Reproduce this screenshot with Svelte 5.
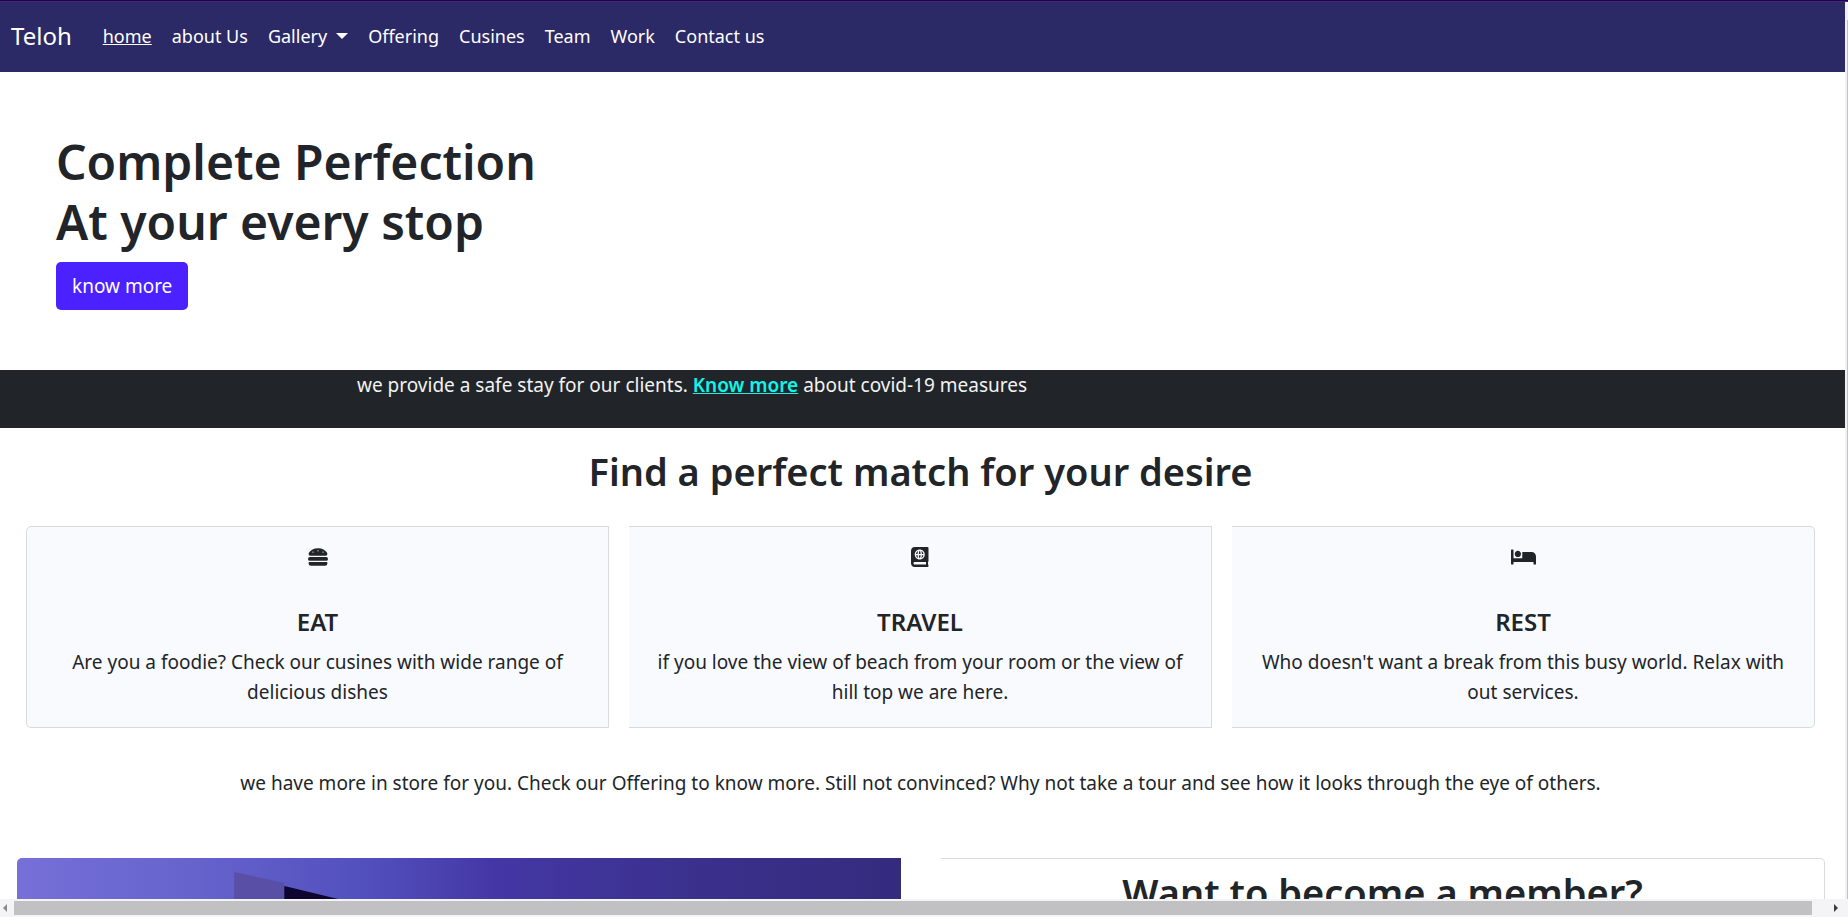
<script>
  const links = ['home', 'about Us', 'Gallery', 'Offering', 'Cusines', 'Team', 'Work', 'Contact us'];

  const cards = [
    {
      title: 'EAT',
      text: 'Are you a foodie? Check our cusines with wide range of delicious dishes',
      viewBox: '0 0 512 512',
      path: 'M464 256H48a48 48 0 0 0 0 96h416a48 48 0 0 0 0-96zm16 128H32a16 16 0 0 0-16 16v16a64 64 0 0 0 64 64h352a64 64 0 0 0 64-64v-16a16 16 0 0 0-16-16zM58.64 224h394.72c34.57 0 54.62-43.9 34.82-75.88C448 83.2 359.55 32.1 256 32c-103.54.1-192 51.2-232.18 116.11C4 180.09 24.07 224 58.64 224zM384 112a16 16 0 1 1-16 16 16 16 0 0 1 16-16zM256 80a16 16 0 1 1-16 16 16 16 0 0 1 16-16zm-128 32a16 16 0 1 1-16 16 16 16 0 0 1 16-16z'
    },
    {
      title: 'TRAVEL',
      text: 'if you love the view of beach from your room or the view of hill top we are here.',
      viewBox: '0 0 448 512',
      path: 'M318.38 208h-39.09c-1.49 27.03-6.54 51.35-14.21 70.41 27.71-13.24 48.02-39.19 53.3-70.41zm0-32c-5.29-31.22-25.59-57.17-53.3-70.41 7.68 19.06 12.72 43.38 14.21 70.41h39.09zM224 97.31c-7.69 7.45-20.77 34.42-23.43 78.69h46.87c-2.67-44.26-15.75-71.24-23.44-78.69zm-41.08 8.28c-27.71 13.24-48.02 39.19-53.3 70.41h39.09c1.49-27.03 6.53-51.35 14.21-70.41zm0 172.82c-7.68-19.06-12.72-43.38-14.21-70.41h-39.09c5.28 31.22 25.59 57.17 53.3 70.41zM247.43 208h-46.87c2.66 44.26 15.74 71.24 23.43 78.69 7.7-7.45 20.78-34.43 23.44-78.69zM448 358.4V25.6c0-16-9.6-25.6-25.6-25.6H96C41.6 0 0 41.6 0 96v320c0 54.4 41.6 96 96 96h326.4c12.8 0 25.6-9.6 25.6-25.6v-16c0-6.4-3.2-12.8-9.6-19.2-3.2-16-3.2-60.8 0-73.6 6.4-3.2 9.6-9.6 9.6-19.2zM224 64c70.69 0 128 57.31 128 128s-57.31 128-128 128S96 262.69 96 192 153.31 64 224 64zm160 384H96c-19.2 0-32-12.8-32-32s16-32 32-32h288v64z'
    },
    {
      title: 'REST',
      text: "Who doesn't want a break from this busy world. Relax with out services.",
      viewBox: '0 0 640 512',
      path: 'M176 256c44.11 0 80-35.89 80-80s-35.89-80-80-80-80 35.89-80 80 35.89 80 80 80zm352-128H304c-8.84 0-16 7.16-16 16v144H64V80c0-8.84-7.16-16-16-16H16C7.16 64 0 71.16 0 80v352c0 8.84 7.16 16 16 16h32c8.84 0 16-7.16 16-16v-48h512v48c0 8.84 7.16 16 16 16h32c8.84 0 16-7.16 16-16V240c0-61.86-50.14-112-112-112z'
    }
  ];
</script>

<div class="window">
  <div class="strip"></div>
  <div class="view">
    <div class="page">
      <nav>
        <a class="brand" href="#top">Teloh</a>
        <ul>
          {#each links as link, i}
            <li><a href="#{link}" class:active={i === 0} class:dropdown={link === 'Gallery'}>{link}</a></li>
          {/each}
        </ul>
      </nav>

      <header>
        <h1>Complete Perfection<br />At your every stop</h1>
        <button type="button">know more</button>
      </header>

      <div class="notice">
        <p>we provide a safe stay for our clients. <a href="#covid">Know more</a> about covid-19 measures</p>
      </div>

      <h2 class="match">Find a perfect match for your desire</h2>

      <div class="cards">
        {#each cards as card}
          <section class="card">
            <svg viewBox={card.viewBox} aria-hidden="true"><path d={card.path} /></svg>
            <h3>{card.title}</h3>
            <p>{card.text}</p>
          </section>
        {/each}
      </div>

      <p class="more">
        we have more in store for you. Check our Offering to know more. Still not convinced? Why not take a tour and see
        how it looks through the eye of others.
      </p>

      <div class="member">
        <svg class="photo" viewBox="0 0 883 300" preserveAspectRatio="xMinYMin slice" aria-hidden="true">
          <defs>
            <linearGradient id="sky" x1="0" y1="0" x2="1" y2="0">
              <stop offset="0" stop-color="#7670d8" />
              <stop offset="0.2" stop-color="#6663cd" />
              <stop offset="0.4" stop-color="#514fbc" />
              <stop offset="0.54" stop-color="#4437a5" />
              <stop offset="0.75" stop-color="#3b318e" />
              <stop offset="1" stop-color="#352b7d" />
            </linearGradient>
          </defs>
          <rect width="883" height="300" fill="url(#sky)" />
          <path d="M217 14l50 11v275h-50z" fill="#5a4fa6" />
          <path d="M267 28l54 13 110 26v233H267z" fill="#0e0530" />
        </svg>
        <section class="join">
          <h2>Want to become a member?</h2>
        </section>
      </div>
    </div>
    <div class="vbar"></div>
  </div>
  <div class="hbar">
    <svg viewBox="0 0 14 18" aria-hidden="true"><path d="M7 5v8L3 9z" fill="#8a8a8c" /></svg>
    <div class="thumb"></div>
    <svg class="right" viewBox="0 0 36 18" aria-hidden="true"><path d="M22 5v8l4-4z" fill="#3c3c3e" /></svg>
  </div>
</div>

<style>
  :global(body) {
    margin: 0;
    overflow: hidden;
  }

  .window {
    display: flex;
    flex-direction: column;
    height: 100vh;
    background: #fff;
    color: #212529;
    font: 19px/30px 'Noto Sans', sans-serif;
  }

  .strip {
    flex: none;
    height: 2px;
    background: linear-gradient(#24024a 50%, #45267a 50%);
  }

  .view {
    flex: 1;
    min-height: 0;
    display: flex;
    overflow: hidden;
  }

  .page {
    flex: 1;
    min-width: 0;
    overflow: hidden;
  }

  .vbar {
    width: 3px;
    flex: none;
    border-top: 18px solid #f1f1f3;
    border-left: 2px solid #f1f1f3;
    box-sizing: border-box;
    background: #c1c1c3;
  }

  h1,
  h2,
  h3,
  p,
  ul {
    margin: 0;
    padding: 0;
  }

  h1,
  h2,
  h3 {
    font-weight: 600;
  }

  nav {
    display: flex;
    align-items: center;
    height: 68px;
    padding: 0 11px 2px;
    background: #2c2a66;
  }

  nav a {
    color: #fff;
    text-decoration: none;
  }

  .brand {
    font-size: 24px;
    margin-right: 31px;
  }

  nav ul {
    display: flex;
    gap: 20px;
    font-size: 18px;
    list-style: none;
  }

  .active {
    text-decoration: underline;
  }

  .dropdown::after {
    content: '';
    display: inline-block;
    margin-left: 9px;
    vertical-align: 4px;
    border: 6px solid transparent;
    border-top-color: #fff;
    border-bottom: 0;
  }

  header {
    padding: 60px 56px;
  }

  h1 {
    font-size: 48px;
    line-height: 60px;
    margin-bottom: 10px;
  }

  button {
    display: block;
    height: 48px;
    padding: 0 16px;
    border: 0;
    border-radius: 5px;
    background: #4b22ff;
    color: #fff;
    font: inherit;
  }

  .notice {
    height: 58px;
    padding-left: 357px;
    background: #212529;
    color: #f1f2f3;
  }

  .notice a {
    color: #0ff5ea;
    font-weight: 600;
  }

  h2 {
    font-size: 38px;
    line-height: 46px;
    text-align: center;
  }

  .match {
    margin-top: 20px;
    padding-right: 4px;
  }

  .cards {
    display: grid;
    grid-template-columns: repeat(3, 1fr);
    gap: 20px;
    padding: 32px 30px 0 26px;
  }

  .card {
    padding: 20px;
    border: 1px solid #d8dae0;
    background: #f9fafd;
    text-align: center;
  }

  .card:first-child {
    border-radius: 5px 0 0 5px;
  }

  .card:last-child {
    border-radius: 0 5px 5px 0;
  }

  .card + .card {
    border-left: 0;
  }

  .card svg {
    display: block;
    height: 20px;
    margin: 0 auto 40px;
    fill: #212529;
  }

  h3 {
    font-size: 24px;
    line-height: 30px;
    margin-bottom: 10px;
  }

  .more {
    padding: 40px 24px 60px 20px;
    text-align: center;
  }

  .member {
    display: grid;
    grid-template-columns: 1fr 1fr;
    gap: 40px;
    padding: 0 20px 0 17px;
  }

  .photo {
    display: block;
    width: 100%;
    height: 300px;
    border-radius: 5px 0 0 5px;
  }

  .join {
    padding: 10px 20px;
    border: 1px solid #d8dae0;
    border-left: 0;
    border-radius: 0 5px 5px 0;
  }

  .hbar {
    flex: none;
    display: flex;
    align-items: center;
    height: 18px;
    background: #f4f4f6;
  }

  .hbar svg {
    flex: none;
    width: 14px;
    height: 18px;
  }

  .hbar .right {
    width: 36px;
  }

  .thumb {
    flex: 1;
    height: 14px;
    background: #c1c0c2;
  }
</style>
